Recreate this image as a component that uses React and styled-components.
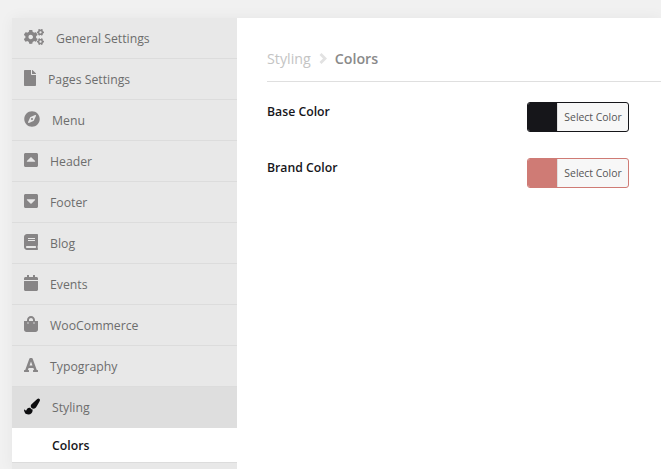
import React from "react";
import styled, { createGlobalStyle } from "styled-components";
import { FaCogs, FaFile, FaCompass, FaCaretSquareUp, FaCaretSquareDown, FaBook, FaCalendar, FaShoppingBag, FaFont } from "react-icons/fa";

const Global = createGlobalStyle`
  html, body { margin: 0; padding: 0; background: #f1f1f1; height: 100%; overflow: hidden; }
  body { font-family: "Open Sans", "Liberation Sans", sans-serif; }
`;

const Page = styled.div`
  width: 661px;
  height: 469px;
  padding: 18px 0 0 12px;
  box-sizing: border-box;
  overflow: hidden;
`;

const Panel = styled.div`
  display: flex;
  height: 451px;
  width: 649px;
  background: #fff;
  box-shadow: 0 0 14px rgba(0, 0, 0, 0.05);
`;

const Sidebar = styled.nav`
  width: 225px;
  flex: none;
  background: #e8e8e8;
`;

const Row = styled.div`
  height: 40px;
  display: flex;
  align-items: center;
  gap: 12px;
  padding-left: 12px;
  border-bottom: 1px solid ${(p) => (p.$active ? "#dedede" : "#dcdcdc")};
  background: ${(p) => (p.$active ? "#dedede" : "transparent")};
  color: #6d6d6d;
  font-size: 12.25px;
`;

const IconWrap = styled.span`
  display: flex;
  width: ${(p) => p.$w}px;
  margin-bottom: 2px;
  color: ${(p) => (p.$active ? "#0d0d0f" : "#878586")};
  font-size: ${(p) => p.$size}px;
`;

const BrushIcon = styled.svg`
  width: 17px;
  height: 17px;
  fill: currentColor;
`;

const SubRow = styled.div`
  height: 34px;
  display: flex;
  align-items: center;
  padding-left: 40px;
  background: #fff;
  border-bottom: 1px solid #dcdcdc;
  color: #16161a;
  font-size: 12.25px;
  font-weight: 600;
`;

const Main = styled.main`
  flex: 1;
  background: #fff;
  padding: 0 0 0 30px;
`;

const Crumbs = styled.div`
  height: 64px;
  display: flex;
  align-items: center;
  padding-top: 18px;
  box-sizing: border-box;
  border-bottom: 1px solid #dfdfdf;
  font-size: 14.25px;
  gap: 8px;
`;

const Crumb = styled.span`
  color: #c4c4c4;
`;

const Current = styled.span`
  color: #8a8a8a;
  font-weight: 600;
`;

const Chevron = styled.svg`
  width: 8px;
  height: 11px;
  color: #e2e2e2;
`;

const Fields = styled.div`
  padding-top: 20px;
`;

const Field = styled.div`
  display: flex;
  align-items: flex-start;
  justify-content: space-between;
  height: 56px;
  width: 362px;
`;

const Label = styled.div`
  color: #16161a;
  font-size: 12.25px;
  font-weight: 600;
  line-height: 20px;
`;

const Picker = styled.button`
  display: flex;
  align-items: stretch;
  width: 102px;
  height: 30px;
  padding: 0;
  margin: 0;
  box-sizing: border-box;
  border: 1px solid ${(p) => p.$color};
  border-radius: 3px;
  background: #f7f7f7;
  overflow: hidden;
  font-family: inherit;
  cursor: pointer;
`;

const Swatch = styled.span`
  width: 29px;
  flex: none;
  background: ${(p) => p.$color};
  border-right: 1px solid #e0e0e0;
`;

const PickerText = styled.span`
  flex: 1;
  text-align: center;
  font-size: 10.4px;
  line-height: 28px;
  color: #555;
  white-space: nowrap;
`;

const items = [
  ["General Settings", FaCogs, 20, 20],
  ["Pages Settings", FaFile, 12, 16],
  ["Menu", FaCompass, 16, 16],
  ["Header", FaCaretSquareUp, 14, 16],
  ["Footer", FaCaretSquareDown, 14, 16],
  ["Blog", FaBook, 14, 16],
  ["Events", FaCalendar, 14, 16],
  ["WooCommerce", FaShoppingBag, 14, 16],
  ["Typography", FaFont, 14, 16],
];

export default function App() {
  return (
    <Page>
      <Global />
      <Panel>
        <Sidebar>
          {items.map(([label, Icon, w, size]) => (
            <Row key={label}>
              <IconWrap $w={w} $size={size}><Icon /></IconWrap>
              {label}
            </Row>
          ))}
          <Row $active>
            <IconWrap $active $w={16} $size={16}>
              <BrushIcon viewBox="0 0 1792 1792">
                <path d="M1615 0q70 0 122.5 46.5t52.5 116.5q0 63-45 151-332 629-465 752-97 91-218 91-126 0-216.5-92.5t-90.5-219.5q0-128 92-212l638-579q59-54 130-54zm-909 1034q39 76 106.5 130t150.5 76l1 71q4 213-129.5 347t-348.5 134q-123 0-218-46.5t-152.5-127.5-86.5-183-29-220q7 5 41 30t62 44.5 59 36.5 46 17q41 0 55-37 25-66 57.5-112.5t69.5-76 88-47.5 103-25.5 125-10.5z" />
              </BrushIcon>
            </IconWrap>
            Styling
          </Row>
          <SubRow>Colors</SubRow>
        </Sidebar>
        <Main>
          <Crumbs>
            <Crumb>Styling</Crumb>
            <Chevron viewBox="0 0 8 11"><path d="M1.5 1L6 5.5 1.5 10" fill="none" stroke="currentColor" strokeWidth="2.8" /></Chevron>
            <Current>Colors</Current>
          </Crumbs>
          <Fields>
            <Field>
              <Label>Base Color</Label>
              <Picker $color="#16161a"><Swatch $color="#16161a" /><PickerText>Select Color</PickerText></Picker>
            </Field>
            <Field>
              <Label>Brand Color</Label>
              <Picker $color="#cf7b75"><Swatch $color="#cf7b75" /><PickerText>Select Color</PickerText></Picker>
            </Field>
          </Fields>
        </Main>
      </Panel>
    </Page>
  );
}
